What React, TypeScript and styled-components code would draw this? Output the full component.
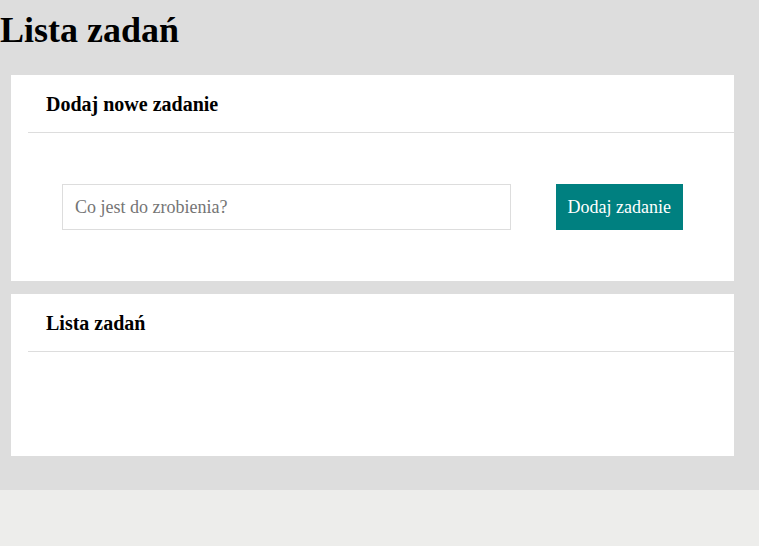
import { FC } from 'react';
import styled, { createGlobalStyle } from 'styled-components';

const GlobalStyle = createGlobalStyle`
    html, body {
        margin: 0;
        padding: 0;
        background: #ededeb;
        font-family: "Liberation Serif", "Times New Roman", serif;
    }
`;

const Page = styled('div')`
    background: #dddddd;
    padding-bottom: 34px;
`;

const Title = styled('h1')`
    margin: 0 0 24px;
    padding-top: 9px;
    font-size: 36px;
    font-weight: 700;
    line-height: normal;
    color: #000;
`;

const Card = styled('section')`
    margin: 0 25px 13px 11px;
    background: #fff;

    &:last-child {
        margin-bottom: 0;
    }
`;

const CardHeader = styled('div')`
    display: flex;
    align-items: center;
    box-sizing: border-box;
    height: 58px;
    margin-left: 17px;
    padding: 2px 18px 0;
    border-bottom: 1px solid #dddddd;
`;

const CardTitle = styled('h3')`
    margin: 0;
    font-size: 20px;
    font-weight: 700;
    line-height: normal;
`;

const FormBody = styled('form')`
    display: flex;
    align-items: center;
    gap: 45px;
    padding: 51px;
`;

const TaskInput = styled('input')`
    flex: 1;
    height: 46px;
    box-sizing: border-box;
    padding: 0 12px;
    border: 1px solid #dddddd;
    outline: none;
    font-family: inherit;
    font-size: 18px;
    color: #222;

    &::placeholder {
        color: #757575;
    }
`;

const AddButton = styled('button')`
    height: 46px;
    padding: 0 12px;
    border: none;
    background: #008080;
    color: #fff;
    font-family: inherit;
    font-size: 18px;
    cursor: pointer;
`;

const TaskList = styled('ul')`
    margin: 0;
    padding: 0;
    list-style: none;
    min-height: 104px;
`;

const App: FC = () => {
    return (
        <>
            <GlobalStyle />
            <Page>
                <Title>Lista zadań</Title>
                <Card>
                    <CardHeader>
                        <CardTitle>Dodaj nowe zadanie</CardTitle>
                    </CardHeader>
                    <FormBody onSubmit={e => e.preventDefault()}>
                        <TaskInput type="text" placeholder="Co jest do zrobienia?" />
                        <AddButton type="submit">Dodaj zadanie</AddButton>
                    </FormBody>
                </Card>
                <Card>
                    <CardHeader>
                        <CardTitle>Lista zadań</CardTitle>
                    </CardHeader>
                    <TaskList />
                </Card>
            </Page>
        </>
    );
};

export default App;
